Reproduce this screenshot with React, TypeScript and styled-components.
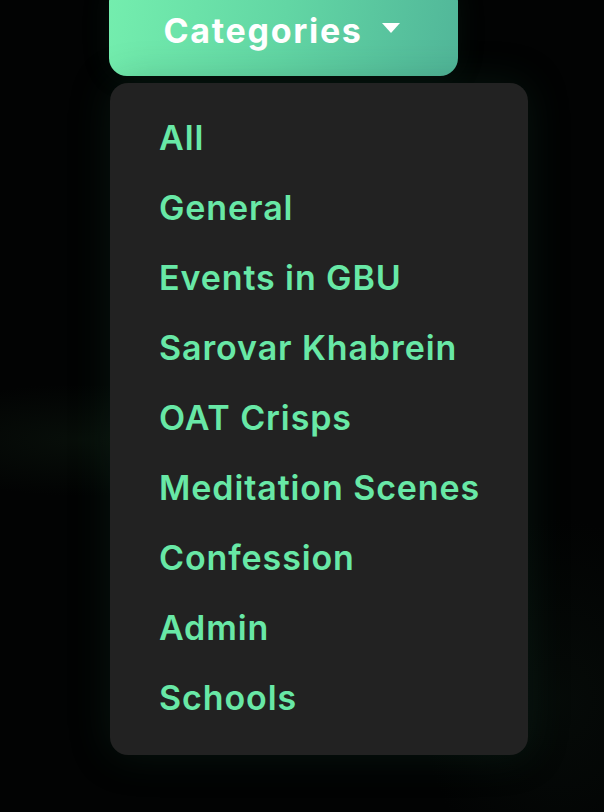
import React from "react";
import styled, { createGlobalStyle } from "styled-components";

const GlobalStyle = createGlobalStyle`
  html, body {
    margin: 0;
    padding: 0;
    background: #020303;
    height: 100%;
    overflow: hidden;
  }
  body {
    font-family: Inter, "Liberation Sans", sans-serif;
  }
  #root {
    min-height: 100%;
  }
`;

const Page = styled.div`
  width: 604px;
  height: 812px;
  background:
    radial-gradient(ellipse 260px 80px at 80px 440px, rgba(20, 40, 24, 0.3), transparent 70%),
    radial-gradient(ellipse 200px 260px at 560px 700px, rgba(14, 28, 20, 0.3), transparent 70%),
    #020303;
  display: flex;
  flex-direction: column;
  align-items: flex-start;
  padding-left: 109px;
  box-sizing: border-box;
`;

const Dropdown = styled.div`
  display: flex;
  flex-direction: column;
  align-items: flex-start;
  gap: 7px;
  margin-top: -16px;
`;

const Toggle = styled.button`
  width: 349px;
  height: 92px;
  border: none;
  border-radius: 18px;
  background: linear-gradient(100deg, #74eeae 0%, #62d6a4 50%, #51b699 100%);
  color: #ffffff;
  font-family: Inter, "Liberation Sans", sans-serif;
  font-weight: 700;
  font-size: 34px;
  letter-spacing: 1.7px;
  display: flex;
  align-items: center;
  justify-content: center;
  gap: 19px;
  padding: 0 4px 0 0;
  box-shadow: 0 0 30px rgba(40, 120, 80, 0.12);
  cursor: pointer;
`;

const Caret = styled.span`
  width: 0;
  height: 0;
  border-left: 9px solid transparent;
  border-right: 9px solid transparent;
  border-top: 10px solid #ffffff;
  margin-top: -4px;
`;

const Menu = styled.ul`
  list-style: none;
  margin: 0 0 0 1px;
  width: 418px;
  box-sizing: border-box;
  padding: 20px 0 22px 0;
  background: #222222;
  border-radius: 18px;
  box-shadow: 0 0 40px rgba(20, 70, 45, 0.28);
`;

const Item = styled.li`
  height: 70px;
  line-height: 70px;
  padding-left: 49px;
  color: #68e8a6;
  font-family: Inter, "Liberation Sans", sans-serif;
  font-weight: 600;
  font-size: 34px;
  letter-spacing: 0.9px;
  white-space: nowrap;
  cursor: pointer;
`;

const categories = [
  "All",
  "General",
  "Events in GBU",
  "Sarovar Khabrein",
  "OAT Crisps",
  "Meditation Scenes",
  "Confession",
  "Admin",
  "Schools",
];

export default function App() {
  return (
    <>
      <GlobalStyle />
      <Page>
        <Dropdown>
          <Toggle>
            Categories
            <Caret />
          </Toggle>
          <Menu>
            {categories.map((c) => (
              <Item key={c}>{c}</Item>
            ))}
          </Menu>
        </Dropdown>
      </Page>
    </>
  );
}
